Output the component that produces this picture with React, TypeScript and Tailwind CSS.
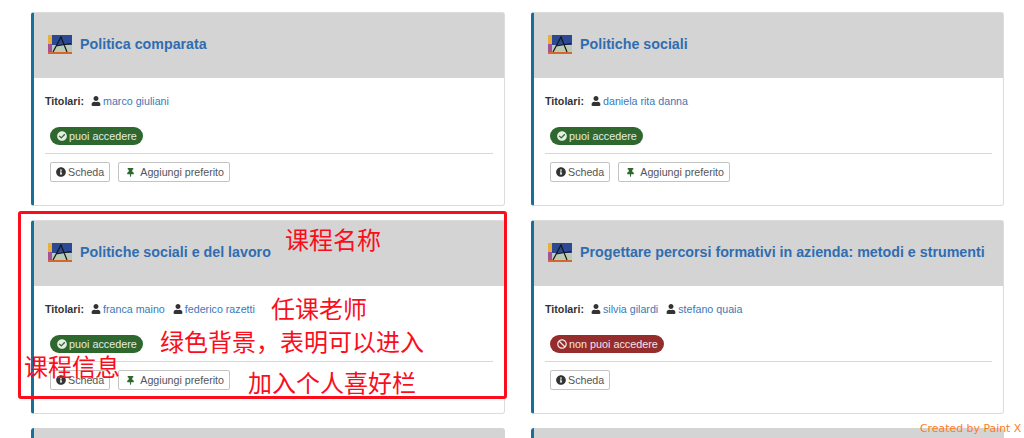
import React from "react";
import { FaBan, FaCheckCircle, FaInfoCircle, FaThumbtack, FaUser } from "react-icons/fa";

type Course = {
  title: string;
  teachers: string[];
  canAccess: boolean;
};

const courses: Course[] = [
  { title: "Politica comparata", teachers: ["marco giuliani"], canAccess: true },
  { title: "Politiche sociali", teachers: ["daniela rita danna"], canAccess: true },
  { title: "Politiche sociali e del lavoro", teachers: ["franca maino", "federico razetti"], canAccess: true },
  { title: "Progettare percorsi formativi in azienda: metodi e strumenti", teachers: ["silvia gilardi", "stefano quaia"], canAccess: false },
];

const CourseLogo = () => (
  <svg width="24" height="19" viewBox="0 0 24 19" className="shrink-0">
    <rect width="24" height="19" fill="#2c4a94" />
    <rect x="0" y="0" width="4" height="9" fill="#e8b03a" />
    <rect x="0" y="9" width="4" height="8" fill="#a4509c" />
    <rect x="4" y="10" width="20" height="7" fill="#bccab4" />
    <rect x="0" y="17" width="24" height="2" fill="#d4662e" />
    <path d="M5 17 L13 2 L19 17 M8 11 L23 8.5" fill="none" stroke="#14141c" strokeWidth="1.2" />
  </svg>
);

const CourseCard = ({ course }: { course: Course }) => (
  <div className="h-[194px] rounded-[3px] border border-[#dcdcdc] border-l-[3px] border-l-[#17709a] bg-white">
    <div className="flex h-[65px] items-center gap-[8px] bg-[#d4d4d4] pb-[2px] pl-[14px]">
      <CourseLogo />
      <h3 className="text-[14.25px] font-bold text-[#2f6db0]">{course.title}</h3>
    </div>
    <div className="px-[11px]">
      <div className="flex h-[46px] items-center pt-[1px] text-[10.7px]">
        <span className="mr-[7px] font-bold text-[#333]">Titolari:</span>
        {course.teachers.map((name) => (
          <span key={name} className="mr-[8px] flex items-center gap-[2px] text-[#3b78b8]">
            <FaUser size={10} className="text-[#333]" />
            {name}
          </span>
        ))}
      </div>
      <div className="mt-[3px] flex pl-[5px]">
        {course.canAccess ? (
          <span className="flex h-[18px] items-center gap-[2px] rounded-full bg-[#2f682f] pr-[6px] pl-[7px] text-[10.8px] text-[#e4ece4]">
            <FaCheckCircle size={10} />
            puoi accedere
          </span>
        ) : (
          <span className="flex h-[18px] items-center gap-[2px] rounded-full bg-[#962d2d] pr-[6px] pl-[7px] text-[10.8px] text-[#f2e4e4]">
            <FaBan size={10} />
            non puoi accedere
          </span>
        )}
      </div>
      <div className="mt-[8px] flex gap-[8px] border-t border-[#d8d8d8] pt-[8px] pl-[5px] text-[10.7px] text-[#555]">
        <button className="flex h-[20px] items-center gap-[2px] rounded-[2px] border border-[#c4c4c4] px-[5px]">
          <FaInfoCircle size={10} className="text-[#333]" />
          Scheda
        </button>
        {course.canAccess && (
          <button className="flex h-[20px] items-center gap-[5px] rounded-[2px] border border-[#c4c4c4] pr-[5px] pl-[7px]">
            <FaThumbtack size={9} className="text-[#2f682f]" />
            Aggiungi preferito
          </button>
        )}
      </div>
    </div>
  </div>
);

const EmptyCard = () => (
  <div className="h-[194px] rounded-[3px] border-l-[3px] border-l-[#17709a] bg-[#d4d4d4]" />
);

const App: React.FC = () => {
  return (
    <div className="relative h-[438px] w-[1024px] overflow-hidden bg-white font-['Liberation_Sans','Noto_Sans_CJK_SC',sans-serif]">
      <div className="grid grid-cols-[474px_473px] gap-x-[26px] gap-y-[14px] pt-[12px] pl-[31px]">
        {courses.map((course) => (
          <CourseCard key={course.title} course={course} />
        ))}
        <EmptyCard />
        <EmptyCard />
      </div>

      {/* Paint X annotations */}
      <div className="absolute top-[211px] left-[18px] h-[188px] w-[489px] rounded-[3px] border-[3px] border-[#fb0d1b]" />
      <div className="font-['Noto_Sans_CJK_SC',sans-serif] text-[#fb0d1b]">
        <span className="absolute top-[222px] left-[285px] text-[24px] leading-[34px]">课程名称</span>
        <span className="absolute top-[291px] left-[271px] text-[24px] leading-[34px]">任课老师</span>
        <span className="absolute top-[324px] left-[160px] text-[24px] leading-[34px]">绿色背景，表明可以进入</span>
        <span className="absolute top-[349px] left-[24px] text-[24px] leading-[34px]">课程信息</span>
        <span className="absolute top-[365px] left-[248px] text-[24px] leading-[34px]">加入个人喜好栏</span>
      </div>
      <span className="absolute top-[421px] left-[920px] font-['DejaVu_Sans',sans-serif] text-[10.9px] leading-[15px] text-[#ff7a1f]">
        Created by Paint X
      </span>
    </div>
  );
};

export default App;
